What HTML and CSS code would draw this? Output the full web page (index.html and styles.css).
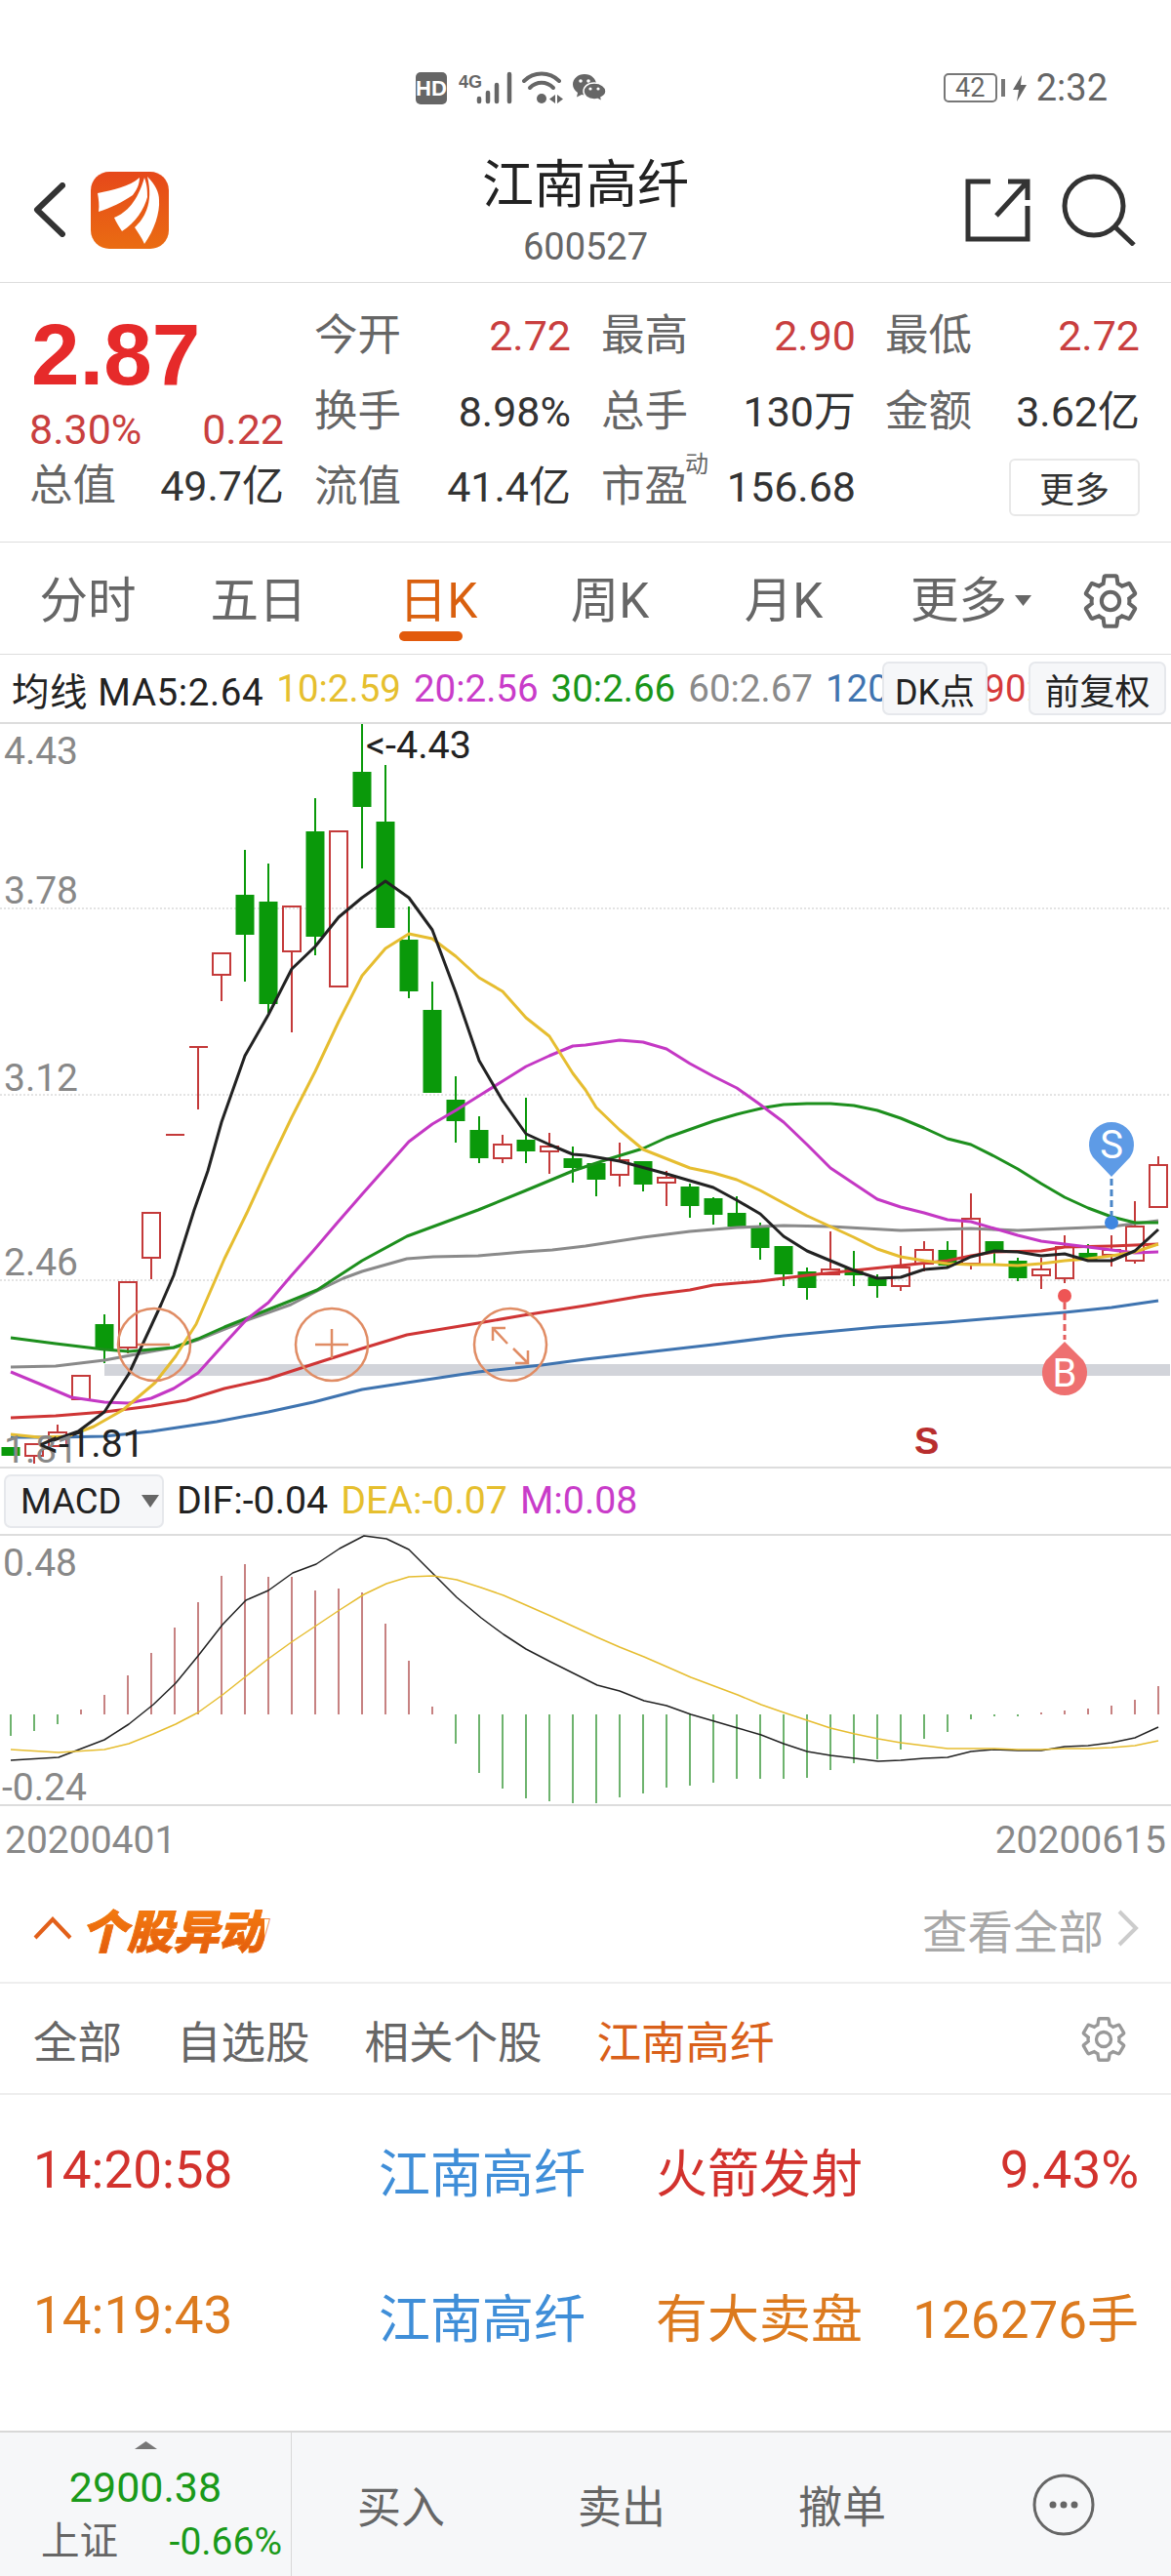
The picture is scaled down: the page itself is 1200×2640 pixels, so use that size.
FILE: index.html
```html
<!DOCTYPE html>
<html lang="zh-CN">
<head>
<meta charset="utf-8">
<title>江南高纤 600527</title>
<link rel="stylesheet" href="styles.css">
</head>
<body>
<svg class="defs" width="0" height="0" aria-hidden="true">
  <symbol id="gear" viewBox="2 1.6 20 20.8">
    <path d="M19.14 12.94c.04-.3.06-.61.06-.94 0-.32-.02-.64-.07-.94l2.03-1.58a.49.49 0 0 0 .12-.61l-1.92-3.32a.488.488 0 0 0-.59-.22l-2.39.96c-.5-.38-1.03-.7-1.62-.94l-.36-2.54a.484.484 0 0 0-.48-.41h-3.84c-.24 0-.43.17-.47.41l-.36 2.54c-.59.24-1.13.57-1.62.94l-2.39-.96c-.22-.08-.47 0-.59.22L2.74 8.87c-.12.21-.08.47.12.61l2.03 1.58c-.05.3-.09.63-.09.94s.02.64.07.94l-2.03 1.58a.49.49 0 0 0-.12.61l1.92 3.32c.12.22.37.29.59.22l2.39-.96c.5.38 1.03.7 1.62.94l.36 2.54c.05.24.24.41.48.41h3.84c.24 0 .44-.17.47-.41l.36-2.54c.59-.24 1.13-.56 1.62-.94l2.39.96c.22.08.47 0 .59-.22l1.92-3.32c.12-.22.07-.47-.12-.61l-2.01-1.58z" fill="none" stroke="currentColor" stroke-width="1.5"/>
    <circle cx="12" cy="12" r="3.4" fill="none" stroke="currentColor" stroke-width="1.5"/>
  </symbol>
</svg>
<div class="page">
  <div class="status">
    <div class="notif">
      <svg class="i-hd" width="32" height="33" viewBox="0 0 32 33"><rect width="32" height="33" rx="5" fill="#666"/><text x="16" y="24" class="hd-t" text-anchor="middle">HD</text></svg>
      <svg class="i-sig" width="56" height="34" viewBox="0 0 56 34"><text x="0" y="17" class="sig-t">4G</text><g stroke="#666" stroke-width="4.500" stroke-linecap="round"><path d="M22 28V31M31 22V31M40 14V31M53 3V31" transform="translate(-1 0)"/></g></svg>
      <svg class="i-wifi" width="42" height="34" viewBox="0 0 42 34"><g fill="none" stroke="#666" stroke-width="4" stroke-linecap="round"><path d="M2 10C12 0 28 0 38 10"/><path d="M8 17C15 10 25 10 32 17"/></g><circle cx="20" cy="28" r="5" fill="#666"/><path d="M34 24v9l-6-4.5zM36 24v9l6-4.5z" fill="#666"/></svg>
      <svg class="i-wx" width="36" height="30" viewBox="0 0 36 30"><path d="M13 1C6 1 1 6 1 11.500C1 15 3 18 6 20L5 24.500L10 22C11 22 12 22.500 13 22.500C20 22.500 25 17.500 25 11.500C25 6 20 1 13 1Z" fill="#666"/><path d="M23 10C16 10 12 14 12 18.500C12 23 16 27 23 27C24 27 25.500 27 26.500 26.500L31 29L30 25C33 23.500 35 21 35 18.500C35 14 30 10 23 10Z" fill="#666" stroke="#fff" stroke-width="1.500"/><g fill="#fff"><circle cx="9" cy="8" r="1.800"/><circle cx="17" cy="8" r="1.800"/><circle cx="19" cy="16" r="1.600"/><circle cx="27" cy="16" r="1.600"/></g></svg>
    </div>
    <div class="sys">
      <span class="batt">42</span>
      <span class="nub"></span>
      <svg class="bolt" width="14" height="27" viewBox="0 0 14 27"><path d="M9 0L0 15H6L4 27L14 10H8Z" fill="#666"/></svg>
      <span class="time">2:32</span>
    </div>
  </div>

  <header class="head">
    <div class="head-l">
      <svg width="33" height="56" viewBox="0 0 33 56"><path d="M30 3L4 28L30 53" fill="none" stroke="#333" stroke-width="6" stroke-linecap="round" stroke-linejoin="round"/></svg>
      <svg width="80" height="79" viewBox="0 0 80 79"><defs><linearGradient id="lg" x1="0" y1="0" x2="0" y2="1"><stop offset="0" stop-color="#e6481a"/><stop offset="1" stop-color="#ea6c12"/></linearGradient></defs><rect width="80" height="79" rx="19" fill="url(#lg)"/><g fill="#fff"><path d="M7 22C22 19 40 15 50 6C50 13 47 19 43 24C33 31 20 37 8 41C9 34 8 28 7 22Z"/><path d="M55 6C58 14 58 20 58 26C55 38 46 52 32 61C29 56 26 52 24 47C37 42 48 30 55 6Z"/><path d="M58 5C66 13 70 21 70 29C71 42 65 60 55 74C52 67 48 62 45 57C54 49 65 33 58 5Z"/></g></svg>
    </div>
    <div class="head-c">
      <h1 class="name">江南高纤</h1>
      <div class="code">600527</div>
    </div>
    <div class="head-r">
      <svg width="67" height="65" viewBox="0 0 67 65"><path d="M26 3H3V62H64V28M44 3H64V22M64 3L32 38" fill="none" stroke="#333" stroke-width="5"/></svg>
      <svg width="76" height="74" viewBox="0 0 76 74"><circle cx="33" cy="33" r="30" fill="none" stroke="#333" stroke-width="5"/><path d="M54 54L74 73" stroke="#333" stroke-width="5"/></svg>
    </div>
  </header>

  <section class="stats">
    <div class="quote">
      <div class="price">2.87</div>
      <div class="chg"><span>8.30%</span><span>0.22</span></div>
      <div class="pair tot"><span class="lb">总值</span><span class="val">49.7亿</span></div>
    </div>
    <div class="stat-grid">
      <div class="pair p1"><span class="lb">今开</span><span class="val up">2.72</span></div>
      <div class="pair p2"><span class="lb">最高</span><span class="val up">2.90</span></div>
      <div class="pair"><span class="lb">最低</span><span class="val up">2.72</span></div>
      <div class="pair p1"><span class="lb">换手</span><span class="val">8.98%</span></div>
      <div class="pair p2"><span class="lb">总手</span><span class="val">130万</span></div>
      <div class="pair"><span class="lb">金额</span><span class="val">3.62亿</span></div>
      <div class="pair p1"><span class="lb">流值</span><span class="val">41.4亿</span></div>
      <div class="pair p2"><span class="lb pe">市盈<sup class="dyn">动</sup></span><span class="val">156.68</span></div>
      <div class="more-cell"><button class="more">更多</button></div>
    </div>
  </section>

  <nav class="tabs">
    <div class="tab-grid">
      <span class="tab">分时</span>
      <span class="tab">五日</span>
      <span class="tab on"><span class="tab-in">日K</span></span>
      <span class="tab">周K</span>
      <span class="tab">月K</span>
      <span class="tab">更多<svg class="caret" width="17" height="11" viewBox="0 0 17 11"><path d="M0 0H17L8.500 11Z" fill="#666"/></svg></span>
    </div>
    <svg class="gear-lg"><use href="#gear"/></svg>
  </nav>

  <div class="legend">
    <div class="legend-in">
      <span class="k k-ma">均线 MA5:2.64</span>
      <span class="c-y">10:2.59</span>
      <span class="c-m">20:2.56</span>
      <span class="c-g">30:2.66</span>
      <span class="c-s">60:2.67</span>
      <span class="c-b">120:2.31</span>
      <span class="c-r">90:2.44</span>
    </div>
    <button class="chip chip-dk">DK点</button>
    <button class="chip chip-fq">前复权</button>
  </div>

  <svg class="kline" width="1200" height="761" viewBox="0 742 1200 761">
    <path class="grid" d="M0 931H1200M0 1122H1200M0 1312H1200"/>
    <rect class="band" x="107" y="1398" width="1092" height="12"/>
    <path class="w-g" d="M107 1347V1397M251 871V1006M275 885V1038M323 818V979M371 742V890M395 784V951M419 929V1023M443 1006V1120M467 1103V1171M491 1144V1192M539 1125V1192M587 1175V1212M611 1192V1226M659 1190V1221M707 1213V1248M731 1227V1255M755 1226V1257M779 1253V1291M803 1277V1318M827 1299V1332M875 1282V1318M899 1306V1330M971 1272V1298M1019 1272V1295M1043 1289V1313M1115 1275V1292"/>
    <path class="b-g" d="M1.500 1483h19v9h-19zM97.500 1357h19v26h-19zM241.500 917h19v41h-19zM265.500 924h19v105h-19zM313.500 852h19v108h-19zM361.500 791h19v36h-19zM385.500 842h19v109h-19zM409.500 963h19v53h-19zM433.500 1035h19v85h-19zM457.500 1127h19v22h-19zM481.500 1158h19v29h-19zM529.500 1168h19v12h-19zM577.500 1187h19v10h-19zM601.500 1192h19v17h-19zM649.500 1190h19v24h-19zM697.500 1216h19v20h-19zM721.500 1228h19v17h-19zM745.500 1243h19v14h-19zM769.500 1258h19v21h-19zM793.500 1277h19v29h-19zM817.500 1303h19v17h-19zM865.500 1300h19v7h-19zM889.500 1309h19v9h-19zM961.500 1281h19v16h-19zM1009.500 1272h19v11h-19zM1033.500 1292h19v18h-19zM1105.500 1284h19v8h-19z"/>
    <path class="c-red" d="M35 1492V1500M59 1460V1468M131 1381V1387M155 1289V1311M170 1163H189M194 1073H213M203 1073V1137M227 999V1026M299 975V1058M515 1163V1173M515 1187V1192M563 1161V1175M563 1180V1203M635 1171V1189M635 1204V1216M683 1200V1207M683 1212V1236M851 1262V1301M923 1277V1299M923 1318V1323M947 1272V1281M947 1295V1303M995 1223V1249M995 1295V1301M1067 1289V1301M1067 1307V1321M1091 1266V1278M1091 1310V1315M1139 1266V1281M1139 1286V1298M1163 1231V1257M1163 1292V1295M1187 1185V1194"/>
    <path class="c-red" d="M26 1480h18v12h-18zM50 1468h18v14h-18zM74 1410h18v24h-18zM122 1314h18v67h-18zM146 1243h18v46h-18zM218 977h18v22h-18zM290 929h18v46h-18zM338 852h18v159h-18zM506 1173h18v14h-18zM554 1175h18v5h-18zM626 1189h18v15h-18zM674 1207h18v5h-18zM842 1301h18v5h-18zM914 1299h18v19h-18zM938 1281h18v14h-18zM986 1249h18v46h-18zM1058 1301h18v6h-18zM1082 1278h18v32h-18zM1130 1281h18v5h-18zM1154 1257h18v35h-18zM1178 1194h18v43h-18z"/>

    <polyline class="ln l-blue" points="11,1473 57,1473 107,1472 155,1467 222,1457 275,1447 321,1437 371,1424 417,1417 490,1406 555,1399 600,1393 731,1378 803,1369 899,1360 971,1355 1091,1345 1139,1340 1187,1333"/>
    <polyline class="ln l-red" points="11,1453 57,1451 107,1447 155,1441 191,1435 230,1423 275,1413 321,1398 371,1382 417,1368 490,1356 536,1348 600,1338 659,1328 707,1322 731,1317 779,1313 827,1307 875,1302 923,1297 971,1292 995,1287 1019,1283 1067,1282 1091,1278 1139,1277 1187,1275"/>
    <polyline class="ln l-gray" points="11,1401 57,1400 107,1394 155,1385 178,1381 203,1373 253,1353 298,1337 325,1323 352,1310 371,1303 417,1290 444,1288 490,1287 536,1283 566,1281 600,1277 659,1268 707,1262 755,1258 803,1256 851,1257 923,1261 995,1259 1043,1261 1091,1259 1139,1257 1163,1254 1187,1251"/>
    <polyline class="ln l-green" points="11,1371 57,1377 107,1383 132,1385 155,1383 178,1381 203,1372 230,1360 260,1348 298,1333 325,1322 348,1307 371,1292 417,1267 490,1240 539,1220 587,1200 623,1188 659,1177 683,1166 731,1149 755,1142 784,1135 803,1132 827,1131 851,1131 875,1133 899,1138 923,1146 947,1156 971,1167 995,1173 1019,1185 1043,1198 1067,1213 1091,1227 1115,1238 1139,1247 1163,1253 1187,1253"/>
    <polyline class="ln l-mag" points="11,1406 40,1418 73,1432 107,1437 132,1438 155,1433 178,1423 203,1407 230,1377 253,1352 275,1335 298,1308 321,1282 344,1255 371,1224 395,1197 419,1170 443,1152 467,1138 491,1123 515,1108 539,1093 563,1082 587,1072 600,1071 635,1066 659,1068 683,1075 707,1090 731,1103 755,1115 779,1132 803,1150 827,1173 851,1197 875,1213 899,1229 923,1237 947,1243 971,1250 995,1252 1019,1259 1043,1266 1067,1272 1091,1275 1115,1278 1139,1281 1163,1284 1187,1283"/>
    <polyline class="ln l-yel" points="11,1470 40,1473 69,1472 96,1462 126,1445 159,1417 180,1390 201,1357 230,1290 253,1243 275,1195 299,1145 323,1098 347,1047 371,1000 395,972 419,957 443,962 467,980 491,1002 515,1016 539,1043 563,1062 587,1100 600,1117 611,1135 635,1158 659,1178 707,1197 731,1202 755,1209 779,1220 803,1233 827,1246 851,1257 875,1268 899,1280 923,1288 947,1292 971,1295 995,1296 1019,1296 1043,1297 1067,1295 1091,1292 1115,1290 1139,1287 1163,1283 1187,1275"/>
    <polyline class="ln l-blk" points="52,1477 80,1467 107,1447 132,1408 153,1363 165,1337 178,1307 199,1240 213,1200 227,1150 251,1082 275,1040 299,993 323,970 347,940 371,920 395,903 419,920 443,953 467,1017 491,1087 515,1128 539,1162 563,1173 587,1183 600,1184 635,1190 683,1203 731,1217 755,1230 779,1244 803,1267 827,1282 851,1292 875,1302 899,1310 923,1309 947,1301 971,1299 995,1288 1019,1282 1043,1283 1067,1287 1091,1285 1115,1292 1139,1292 1163,1282 1187,1260"/>

    <g class="zoom-ic">
      <circle cx="158" cy="1378" r="37"/><path d="M141 1378H174"/>
      <circle cx="340" cy="1378" r="37"/><path d="M323 1378H357M340 1362V1392"/>
      <circle cx="523" cy="1378" r="37"/><path d="M505 1361L520 1377M505 1374V1361H518M526 1382L541 1397M528 1397H541V1384"/>
    </g>

    <path class="dash-s" d="M1139 1208V1246"/>
    <circle class="f-s" cx="1139" cy="1253" r="7"/>
    <path class="f-s2" d="M1139 1206L1120 1186A23 23 0 1 1 1158 1186Z"/>
    <text class="pin-t" x="1139" y="1187" text-anchor="middle">S</text>
    <path class="dash-b" d="M1091 1335V1373"/>
    <circle class="f-b" cx="1091" cy="1328" r="7"/>
    <path class="f-b2" d="M1091 1375L1110 1394A23 23 0 1 1 1072 1394Z"/>
    <text class="pin-t" x="1091" y="1421" text-anchor="middle">B</text>

    <text class="ax" x="4" y="783">4.43</text>
    <text class="ax" x="4" y="926">3.78</text>
    <text class="ax" x="4" y="1118">3.12</text>
    <text class="ax" x="4" y="1307">2.46</text>
    <text class="ax" x="4" y="1499">1.81</text>
    <text class="ext" x="375" y="777">&lt;-4.43</text>
    <text class="ext" x="40" y="1493">&lt;-1.81</text>
    <text class="mark" x="937" y="1490">S</text>
  </svg>

  <div class="macd-bar">
    <button class="macd-btn">MACD<svg width="18" height="13" viewBox="0 0 18 13"><path d="M0 0H18L9 13Z" fill="#666"/></svg></button>
    <span class="k">DIF:-0.04</span>
    <span class="c-y">DEA:-0.07</span>
    <span class="c-m">M:0.08</span>
  </div>

  <svg class="macd" width="1200" height="275" viewBox="0 1574 1200 275">
    <path class="h-r" d="M83 1757V1752M107 1757V1737M131 1757V1717M155 1757V1694M179 1757V1668M203 1757V1642M227 1757V1615M251 1757V1603M275 1757V1616M299 1757V1616M323 1757V1630M347 1757V1628M371 1757V1632M395 1757V1664M419 1757V1702M443 1757V1749M1067 1757V1755M1091 1757V1753M1115 1757V1751M1139 1757V1748M1163 1757V1742M1187 1757V1728"/>
    <path class="h-g" d="M11 1757V1779M35 1757V1774M59 1757V1767M467 1757V1787M491 1757V1817M515 1757V1833M539 1757V1843M563 1757V1846M587 1757V1848M611 1757V1848M635 1757V1842M659 1757V1838M683 1757V1832M707 1757V1830M731 1757V1827M755 1757V1823M779 1757V1823M803 1757V1823M827 1757V1822M851 1757V1814M875 1757V1807M899 1757V1803M923 1757V1793M947 1757V1782M971 1757V1775M995 1757V1762M1019 1757V1759M1043 1757V1759"/>
    <polyline class="ln1 l-blk" points="11,1804 60,1801 107,1783 132,1767 157,1747 180,1725 203,1697 228,1665 252,1640 275,1630 300,1612 324,1603 348,1587 373,1574 396,1577 419,1588 444,1613 468,1637 493,1658 516,1675 539,1690 564,1703 588,1715 612,1727 635,1733 660,1743 683,1748 708,1757 732,1764 756,1771 780,1778 803,1787 827,1795 851,1799 876,1802 900,1805 923,1804 947,1802 971,1801 995,1795 1019,1793 1043,1794 1067,1794 1091,1790 1115,1789 1139,1786 1163,1781 1187,1770"/>
    <polyline class="ln1 l-yel" points="11,1793 60,1796 107,1793 132,1787 157,1777 180,1767 203,1755 228,1737 252,1718 275,1700 300,1682 324,1666 348,1650 373,1634 396,1623 419,1616 444,1615 468,1619 493,1627 516,1635 539,1645 564,1656 588,1667 612,1678 635,1688 660,1698 683,1708 708,1719 732,1728 756,1737 780,1747 803,1755 827,1763 851,1771 876,1777 900,1782 923,1786 947,1789 971,1792 995,1792 1019,1792 1043,1793 1067,1793 1091,1792 1115,1792 1139,1791 1163,1789 1187,1784"/>
    <text class="ax" x="3" y="1615">0.48</text>
    <text class="ax" x="2" y="1845">-0.24</text>
  </svg>

  <div class="dates"><span>20200401</span><span>20200615</span></div>

  <div class="sec-head">
    <svg width="40" height="24" viewBox="0 0 40 24"><path d="M2 22L20 3L38 22" fill="none" stroke="#e2601a" stroke-width="4"/></svg>
    <span class="sec-title">个股异动</span>
    <span class="sec-all">查看全部</span>
    <svg width="23" height="38" viewBox="0 0 23 38"><path d="M3 2L20 19L3 36" fill="none" stroke="#ccc" stroke-width="4"/></svg>
  </div>

  <div class="sub-tabs">
    <span>全部</span><span>自选股</span><span>相关个股</span><span class="sel">江南高纤</span>
    <svg class="gear-sm"><use href="#gear"/></svg>
  </div>

  <div class="alerts">
    <div class="alert a-red"><span>14:20:58</span><span class="stock">江南高纤</span><span>火箭发射</span><span class="amt">9.43%</span></div>
    <div class="alert a-org"><span>14:19:43</span><span class="stock">江南高纤</span><span>有大卖盘</span><span class="amt">126276手</span></div>
  </div>

  <footer class="foot">
    <div class="index">
      <svg width="23" height="8" viewBox="0 0 23 8"><path d="M11.500 0L23 8H0Z" fill="#777"/></svg>
      <div class="idx-v">2900.38</div>
      <div class="idx-b"><span class="idx-n">上证</span><span class="idx-p">-0.66%</span></div>
    </div>
    <div class="acts">
      <span>买入</span><span>卖出</span><span>撤单</span>
      <svg class="dots" width="64" height="64" viewBox="0 0 64 64"><circle cx="32" cy="32" r="30" fill="none" stroke="#666" stroke-width="3"/><g fill="#666"><circle cx="21" cy="32" r="3.500"/><circle cx="32" cy="32" r="3.500"/><circle cx="43" cy="32" r="3.500"/></g></svg>
    </div>
  </footer>
</div>
</body>
</html>
```
FILE: styles.css
```css
* { box-sizing: border-box; }
html, body { margin: 0; padding: 0; background: #fff; }
body { font-family: Roboto, "Noto Sans CJK SC", "Liberation Sans", sans-serif; color: #333; }
button { font-family: inherit; padding: 0; }
.defs { position: absolute; }
.page { width: 1200px; height: 2640px; display: flex; flex-direction: column; overflow: hidden; }

/* status bar */
.status { margin-top: 54px; height: 72px; display: flex; align-items: center; padding-left: 426px; padding-right: 65px; }
.notif { display: flex; align-items: center; gap: 9px; }
.i-sig { margin-left: 3px; }
.hd-t { font: 700 22px "Liberation Sans", sans-serif; fill: #fff; }
.sig-t { font: 700 18px "Liberation Sans", sans-serif; fill: #666; }
.sys { margin-left: auto; display: flex; align-items: center; }
.batt { width: 55px; height: 30px; border: 2px solid #777; border-radius: 5px; font-size: 27px; line-height: 26px; text-align: center; color: #666; }
.nub { width: 4px; height: 18px; background: #777; margin-left: 4px; }
.bolt { margin-left: 8px; }
.time { font-size: 38px; line-height: 44px; color: #666; margin-left: 10px; }

/* header */
.head { height: 164px; display: grid; grid-template-columns: 300px 600px 300px; border-bottom: 1px solid #ddd; }
.head-l { display: flex; align-items: flex-start; gap: 26px; padding: 50px 0 0 34px; }
.head-l svg:first-child { margin-top: 11px; }
.head-c { text-align: center; padding-top: 34px; }
.name { margin: 0; font-size: 53px; line-height: 60px; font-weight: 400; color: #222; }
.code { margin-top: 11px; font-size: 38px; line-height: 44px; color: #666; }
.head-r { display: flex; align-items: flex-start; padding: 52px 0 0 89px; gap: 32px; }
.head-r svg:first-child { margin-top: 5px; }

/* quote stats */
.stats { height: 266px; display: flex; padding: 15px 32px 0 30px; border-bottom: 1px solid #ddd; font-size: 43px; }
.quote { width: 261px; margin-right: 31px; }
.price { margin: 8px 0 0 2px; font: 700 89px/100px "Liberation Sans", sans-serif; color: #e62a2a; }
.chg { margin-top: 2px; height: 50px; line-height: 50px; display: flex; justify-content: space-between; color: #c93f3f; }
.tot { margin-top: 8px; height: 50px; }
.stat-grid { flex: 1; display: grid; grid-template-columns: 294px 291px 261px; grid-template-rows: 78px 77px 78px; }
.pair { display: flex; justify-content: space-between; align-items: center; line-height: 50px; }
.p1 { padding-right: 31px; }
.p2 { padding-right: 30px; }
.lb { color: #666; font-size: 44.500px; }
.val { color: #333; }
.up { color: #c93f3f; }
.pe { position: relative; }
.dyn { position: absolute; left: 86px; top: -11px; font-size: 24px; line-height: 26px; color: #666; vertical-align: baseline; }
.more-cell { display: flex; justify-content: flex-end; align-items: center; }
.more { width: 134px; height: 59px; border: 2px solid #e8e8e8; border-radius: 6px; background: #fff; color: #333; font-size: 36px; }

/* period tabs */
.tabs { height: 115px; display: flex; align-items: center; border-bottom: 1px solid #ddd; padding: 5px 0 0 2px; }
.tab-grid { display: grid; grid-template-columns: 176px 174px 194px 158px 198px 186px; font-size: 49.500px; line-height: 60px; color: #666; text-align: center; }
.tab.on { color: #d9600f; }
.tab-in { position: relative; display: inline-block; }
.tab-in::after { content: ""; position: absolute; left: 0; top: 61px; width: 65px; height: 10px; border-radius: 5px; background: #e25a0c; }
.caret { margin-left: 8px; vertical-align: 12px; }
.gear-lg { width: 56px; height: 56px; margin-left: 22px; color: #666; }

/* MA legend */
.legend { position: relative; height: 71px; border-bottom: 2px solid #ddd; }
.legend-in { height: 69px; display: flex; align-items: center; gap: 13px; padding-left: 12px; font-size: 38.500px; white-space: nowrap; overflow: hidden; }
.k-ma { letter-spacing: .6px; }
.k { color: #222; }
.c-y { color: #e6bf2e; }
.c-m { color: #c93cc9; }
.c-g { color: #1a961a; }
.c-s { color: #8a8a8a; }
.c-b { color: #3f74b0; }
.c-r { color: #d63a3a; }
.chip { position: absolute; top: 7px; height: 55px; background: #f6f7f9; border: 2px solid #e6e8ec; border-radius: 7px; color: #222; font-size: 36px; }
.chip-dk { left: 904px; width: 108px; }
.chip-fq { left: 1054px; width: 141px; }

/* K-line chart */
.kline, .macd { display: block; flex: none; overflow: visible; }
.grid { stroke: #c8c8c8; stroke-width: 1; stroke-dasharray: 2 2; fill: none; }
.band { fill: #d2d4da; }
.w-g { stroke: #0a990a; stroke-width: 2; fill: none; }
.b-g { fill: #0a990a; }
.c-red { stroke: #c43a3a; stroke-width: 2; fill: none; }
.ln { fill: none; stroke-width: 3; stroke-linejoin: round; }
.ln1 { fill: none; stroke-width: 1.500; stroke-linejoin: round; }
.l-blue { stroke: #3f74b0; }
.l-red { stroke: #cf3535; }
.l-gray { stroke: #8a8a8a; }
.l-green { stroke: #1d8f1d; }
.l-mag { stroke: #c438c4; }
.l-yel { stroke: #e6bd30; }
.l-blk { stroke: #222; }
.zoom-ic { fill: none; stroke: #e08c64; stroke-width: 2.500; }
.dash-s { stroke: #4a86c8; stroke-width: 3; stroke-dasharray: 7 4; }
.dash-b { stroke: #e45c5c; stroke-width: 3; stroke-dasharray: 7 4; }
.f-s { fill: #3f86e0; }
.f-s2 { fill: #5e9be6; }
.f-b { fill: #ee5555; }
.f-b2 { fill: #ee7070; }
.pin-t { font: 400 40px Roboto, sans-serif; fill: #fff; }
.ax { font: 400 39px Roboto, sans-serif; fill: #888; }
.ext { font: 400 39.500px Roboto, sans-serif; fill: #222; }
.mark { font: 700 38px "Liberation Sans", sans-serif; fill: #b82e2e; }

/* MACD */
.macd-bar { height: 71px; display: flex; align-items: center; gap: 13px; padding: 0 0 1px 4px; border-top: 2px solid #ddd; border-bottom: 2px solid #ddd; font-size: 39.300px; white-space: nowrap; }
.macd-btn { width: 164px; height: 55px; display: flex; align-items: center; gap: 20px; padding-left: 15px; background: #f6f7f9; border: 2px solid #e6e8ec; border-radius: 7px; color: #222; font-size: 36.500px; }
.h-r { stroke: #b55a5a; stroke-width: 1.500; fill: none; }
.h-g { stroke: #3f9a3f; stroke-width: 1.500; fill: none; }

.dates { height: 72px; border-top: 2px solid #ddd; display: flex; justify-content: space-between; align-items: center; padding: 0 5px; font-size: 39px; color: #888; }

/* stock alerts */
.sec-head { height: 112px; display: flex; align-items: center; padding: 0 33px 0 34px; border-bottom: 2px solid #eee; }
.sec-title { margin-left: 9px; font-size: 47px; font-weight: 900; font-style: italic; background: linear-gradient(#f9850f, #e0560d); -webkit-background-clip: text; background-clip: text; color: transparent; -webkit-text-stroke: .7px #ef700f; }
.sec-all { margin-left: auto; margin-right: 13px; font-size: 46.500px; color: #a8a8a8; }
.sub-tabs { height: 114px; display: flex; align-items: center; gap: 56px; padding: 2px 0 0 34px; border-bottom: 2px solid #eee; font-size: 45.500px; color: #666; }
.sel { color: #d9601a; }
.gear-sm { width: 46px; height: 46px; margin-left: auto; margin-right: 46px; color: #999; }
.alerts { padding-top: 2px; }
.alert { height: 149px; display: grid; grid-template-columns: 354px 284px 1fr auto; align-items: center; padding: 0 33px 0 34px; font-size: 53px; }
.a-red { color: #d2322d; }
.a-org { color: #dc7a1e; }
.stock { color: #3f8ed8; }
.amt { text-align: right; }

/* footer */
.foot { margin-top: auto; height: 149px; display: flex; background: #f6f7f9; border-top: 2px solid #d8d8d8; }
.index { width: 299px; border-right: 1px solid #d8d8d8; display: flex; flex-direction: column; align-items: center; padding-top: 9px; }
.idx-v { margin-top: 14px; font-size: 43px; line-height: 50px; color: #1a9a1a; }
.idx-b { width: 100%; margin-top: 6px; display: flex; justify-content: space-between; padding: 0 9px 0 42px; line-height: 50px; }
.idx-n { font-size: 39.500px; color: #666; }
.idx-p { font-size: 39px; color: #1a9a1a; }
.acts { flex: 1; display: flex; align-items: center; gap: 136px; padding-left: 67px; font-size: 45px; color: #666; }
.dots { margin-left: 14px; }
```
